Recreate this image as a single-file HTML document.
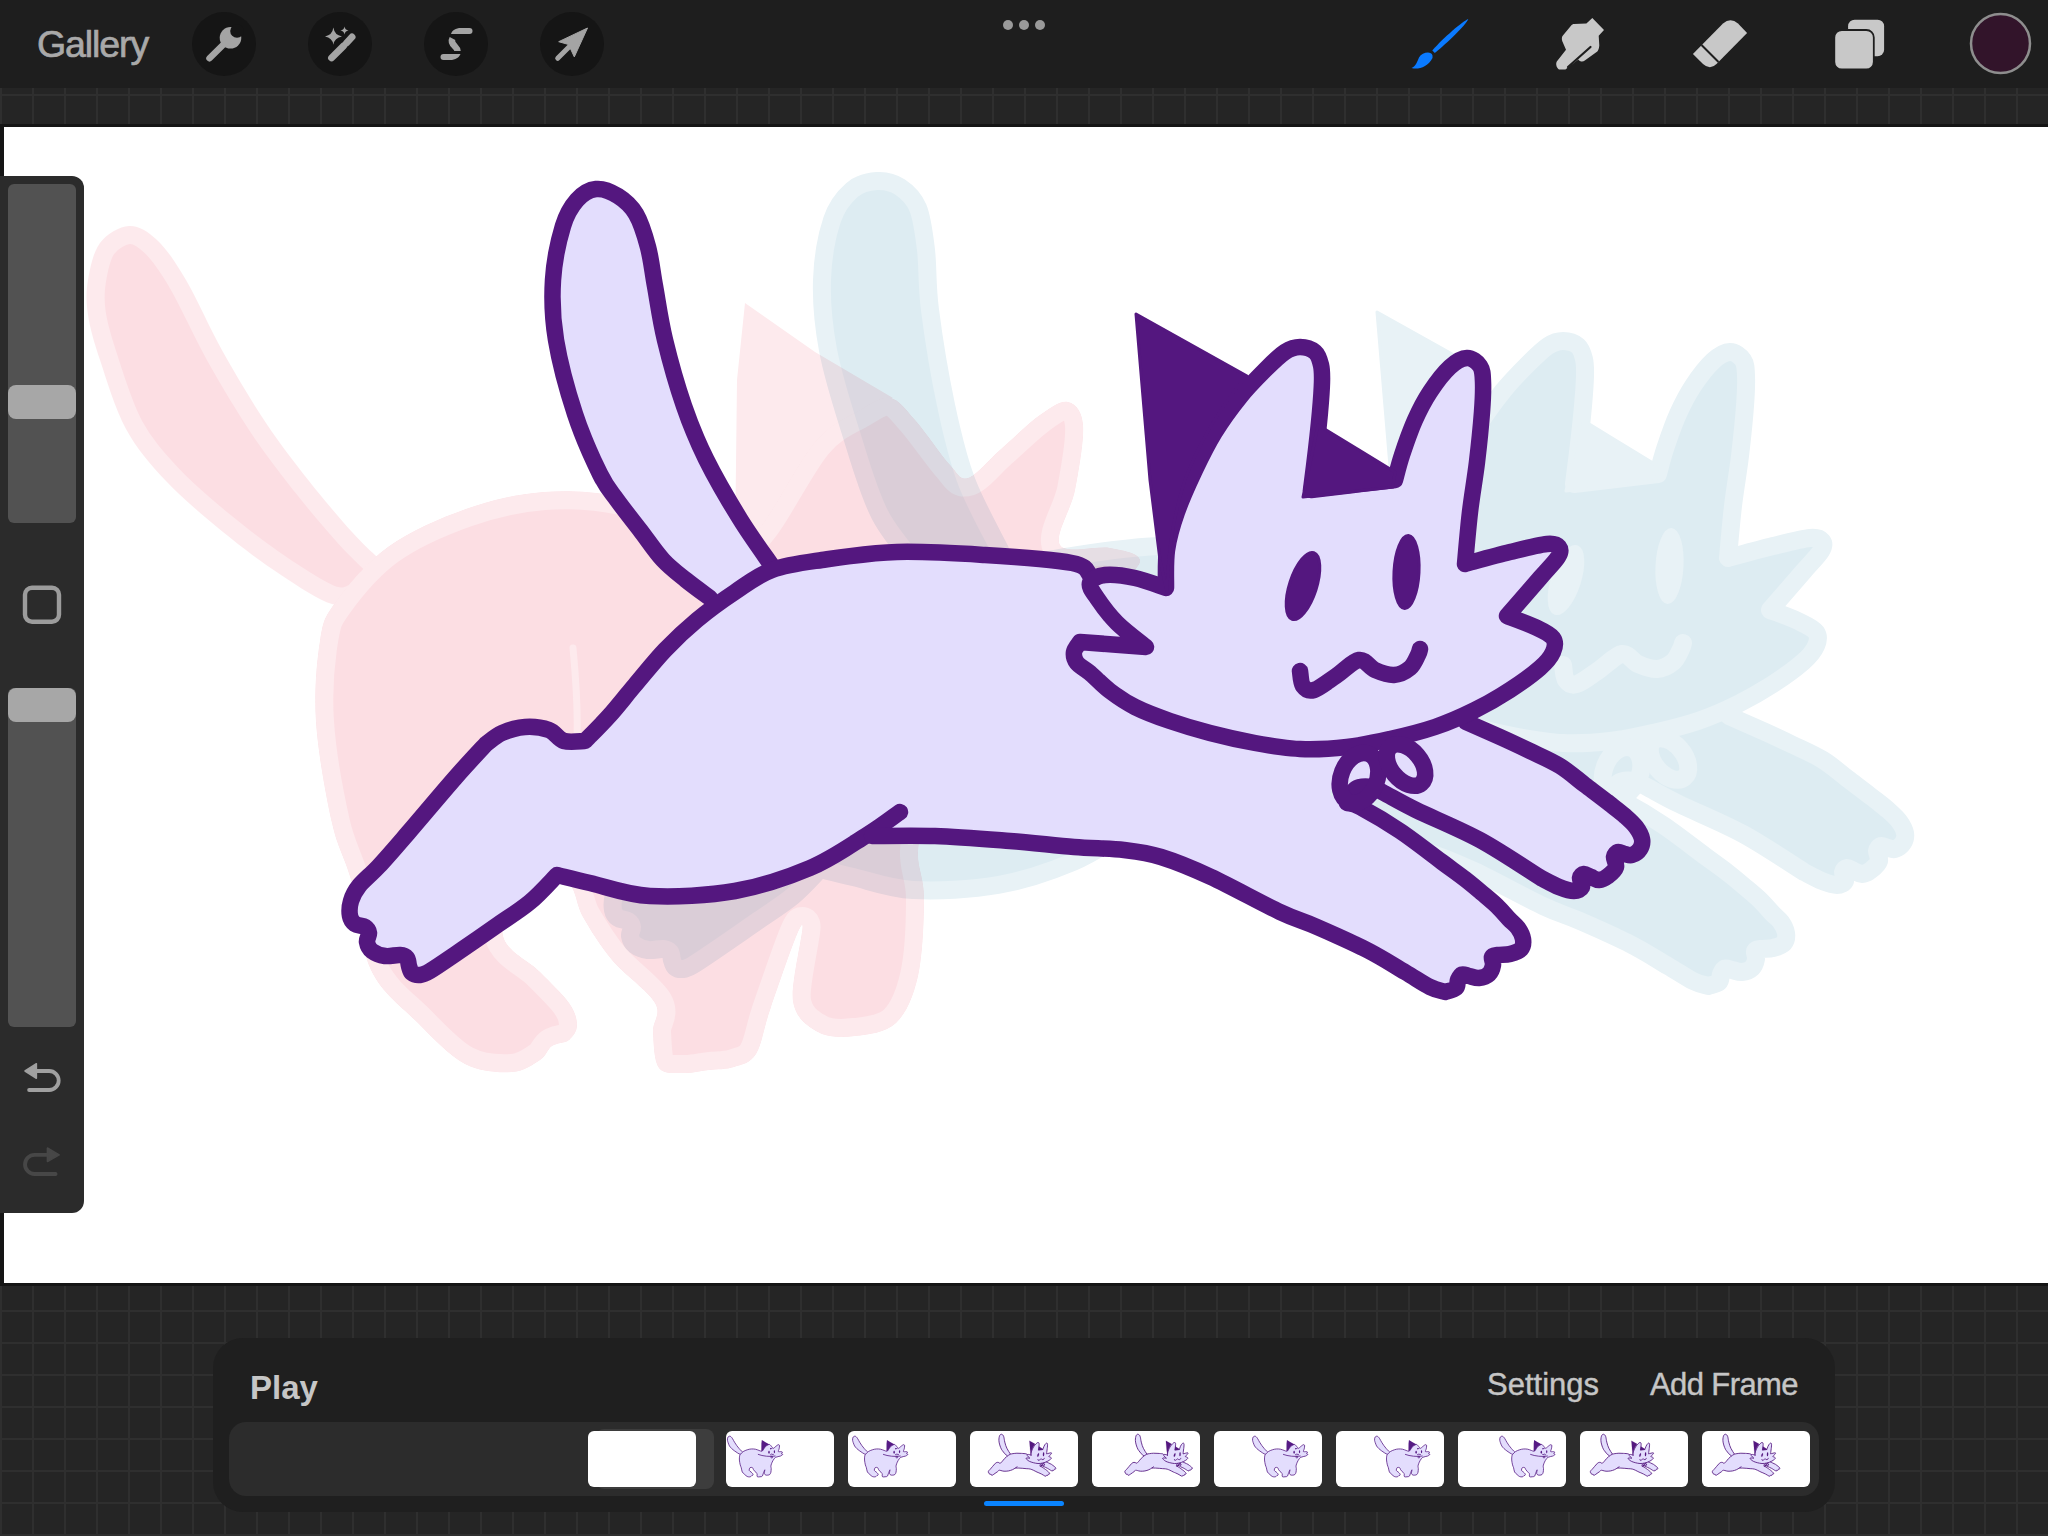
<!DOCTYPE html><html><head><meta charset="utf-8"><style>
*{margin:0;padding:0;box-sizing:border-box}
html,body{width:2048px;height:1536px;overflow:hidden;background:#252525;font-family:"Liberation Sans",sans-serif}
.grid{position:absolute;left:0;width:2048px;background-color:#252525;
 background-image:linear-gradient(to right, #2f2f2f 0 2px, transparent 2px), linear-gradient(to bottom, #2f2f2f 0 2px, transparent 2px);
 background-size:32px 32px;}
#topgrid{top:88px;height:39px;background-position:0px 6px}
#botgrid{top:1283px;height:253px;background-position:0px 27px}
#topbar{position:absolute;left:0;top:0;width:2048px;height:88px;background:#1e1e1e}
#canvas{position:absolute;left:4px;top:127px;width:2044px;height:1156px;background:#fff;overflow:hidden}
#shadowL{position:absolute;left:0;top:124px;width:4px;height:1162px;background:#151515}
#shadowT{position:absolute;left:0;top:124px;width:2048px;height:3px;background:#151515}
#shadowB{position:absolute;left:0;top:1283px;width:2048px;height:3px;background:#151515}
.gal{position:absolute;left:37px;top:23px;font-size:37.5px;color:#a9a9a9;letter-spacing:-1.1px;-webkit-text-stroke:0.7px #a9a9a9}
.circ{position:absolute;top:12px;width:64px;height:64px;border-radius:50%;background:#151515}
#side{position:absolute;left:0;top:176px;width:84px;height:1037px;background:#2b2b2b;border-radius:0 12px 12px 0}
.track{position:absolute;left:8px;width:68px;background:#525252;border-radius:6px}
.thumb{position:absolute;left:8px;width:68px;height:34px;background:#a7a7a7;border-radius:8px}
#panel{position:absolute;left:213px;top:1338px;width:1622px;height:174px;background:#1f1f1f;border-radius:30px}
#ptrack{position:absolute;left:229px;top:1422px;width:1590px;height:74px;background:#2c2c2c;border-radius:17px}
.txt{position:absolute;color:#c6c6c6;font-size:31px;-webkit-text-stroke:0.4px #c6c6c6}
.frame{position:absolute;top:1431px;width:108px;height:56px;background:#fff;border-radius:6px;overflow:hidden}
</style></head><body>
<div id="topbar"></div>
<div class="grid" id="topgrid"></div>
<div class="grid" id="botgrid"></div>
<div id="shadowT"></div><div id="shadowL"></div><div id="shadowB"></div>
<svg style="position:absolute;left:0;top:0" width="2048" height="1536" viewBox="0 0 2048 1536">
<rect x="4" y="127" width="2044" height="1156" fill="#fff"/>
<defs><clipPath id="cv"><rect x="4" y="127" width="2044" height="1156"/></clipPath>
<g id="catS"><g fill="#e3ddfd" stroke="none"><path d="M710.0,598.0 C706.0,595.0 693.8,586.3 686.0,580.0 C678.2,573.7 670.7,568.3 663.0,560.0 C655.3,551.7 647.7,540.0 640.0,530.0 C632.3,520.0 623.7,509.3 617.0,500.0 C610.3,490.7 607.0,488.3 600.0,474.0 C593.0,459.7 582.3,436.3 575.0,414.0 C567.7,391.7 559.7,362.3 556.0,340.0 C552.3,317.7 551.8,299.0 553.0,280.0 C554.2,261.0 559.0,239.3 563.0,226.0 C567.0,212.7 571.5,206.2 577.0,200.0 C582.5,193.8 589.2,189.7 596.0,189.0 C602.8,188.3 611.3,191.8 618.0,196.0 C624.7,200.2 631.0,205.5 636.0,214.0 C641.0,222.5 644.8,235.0 648.0,247.0 C651.2,259.0 652.2,270.5 655.0,286.0 C657.8,301.5 660.2,320.0 665.0,340.0 C669.8,360.0 677.2,386.2 684.0,406.0 C690.8,425.8 696.7,440.2 706.0,459.0 C715.3,477.8 729.0,501.2 740.0,519.0 C751.0,536.8 766.7,558.2 772.0,566.0 L765,580 Z"/><path d="M1090.0,575.0 C1087.0,573.0 1089.5,566.3 1072.0,563.0 C1054.5,559.7 1014.2,556.8 985.0,555.0 C955.8,553.2 924.2,551.2 897.0,552.0 C869.8,552.8 842.8,557.0 822.0,560.0 C801.2,563.0 786.5,564.7 772.0,570.0 C757.5,575.3 747.5,583.7 735.0,592.0 C722.5,600.3 708.7,610.3 697.0,620.0 C685.3,629.7 675.3,639.2 665.0,650.0 C654.7,660.8 644.2,674.2 635.0,685.0 C625.8,695.8 618.3,705.7 610.0,715.0 C601.7,724.3 589.2,736.7 585.0,741.0 C581.5,741.0 570.0,742.8 564.0,741.0 C558.0,739.2 555.5,732.3 549.0,730.0 C542.5,727.7 532.8,726.5 525.0,727.0 C517.2,727.5 508.5,730.2 502.0,733.0 C495.5,735.8 488.7,742.2 486.0,744.0 C480.8,749.7 468.0,763.2 455.0,778.0 C442.0,792.8 420.7,818.3 408.0,833.0 C395.3,847.7 387.2,857.2 379.0,866.0 C370.8,874.8 363.7,880.2 359.0,886.0 C354.3,891.8 352.5,896.0 351.0,901.0 C349.5,906.0 349.3,912.2 350.0,916.0 C350.7,919.8 352.5,922.2 355.0,924.0 C357.5,925.8 362.7,925.5 365.0,927.0 C367.3,928.5 368.7,930.5 369.0,933.0 C369.3,935.5 366.5,939.0 367.0,942.0 C367.5,945.0 369.0,948.7 372.0,951.0 C375.0,953.3 380.3,955.3 385.0,956.0 C389.7,956.7 396.3,954.7 400.0,955.0 C403.7,955.3 405.5,956.2 407.0,958.0 C408.5,959.8 408.2,963.5 409.0,966.0 C409.8,968.5 410.2,971.5 412.0,973.0 C413.8,974.5 417.0,975.3 420.0,975.0 C423.0,974.7 423.8,974.7 430.0,971.0 C436.2,967.3 446.0,960.5 457.0,953.0 C468.0,945.5 483.8,934.5 496.0,926.0 C508.2,917.5 519.8,910.5 530.0,902.0 C540.2,893.5 552.5,879.5 557.0,875.0 C562.5,876.3 574.5,879.5 590.0,883.0 C605.5,886.5 625.8,894.7 650.0,896.0 C674.2,897.3 708.3,895.7 735.0,891.0 C761.7,886.3 788.0,877.3 810.0,868.0 C832.0,858.7 856.2,840.5 867.0,835.0 C877.8,829.5 873.7,835.0 875.0,835.0 C882.5,836.0 912.0,835.2 935.0,836.0 C958.0,836.8 986.8,839.2 1010.0,841.0 C1033.2,842.8 1055.0,845.5 1074.0,847.0 C1093.0,848.5 1109.5,848.3 1124.0,850.0 C1138.5,851.7 1146.5,852.5 1161.0,857.0 C1175.5,861.5 1191.2,867.8 1211.0,877.0 C1230.8,886.2 1262.3,903.7 1280.0,912.0 C1297.7,920.3 1302.5,920.7 1317.0,927.0 C1331.5,933.3 1352.3,942.5 1367.0,950.0 C1381.7,957.5 1394.5,965.8 1405.0,972.0 C1415.5,978.2 1423.3,983.7 1430.0,987.0 C1436.7,990.3 1442.5,991.2 1445.0,992.0 C1446.8,991.3 1453.8,990.0 1456.0,988.0 C1458.2,986.0 1457.0,982.2 1458.0,980.0 C1459.0,977.8 1460.2,975.2 1462.0,974.5 C1463.8,973.8 1466.2,975.4 1469.0,976.0 C1471.8,976.6 1475.7,978.3 1479.0,978.0 C1482.3,977.7 1486.7,976.2 1489.0,974.0 C1491.3,971.8 1492.5,967.8 1493.0,965.0 C1493.5,962.2 1491.2,958.7 1492.0,957.0 C1492.8,955.3 1495.0,955.5 1498.0,955.0 C1501.0,954.5 1506.2,955.0 1510.0,954.0 C1513.8,953.0 1518.8,951.5 1521.0,949.0 C1523.2,946.5 1523.5,942.5 1523.0,939.0 C1522.5,935.5 1520.3,931.3 1518.0,928.0 C1515.7,924.7 1512.5,922.7 1509.0,919.0 C1505.5,915.3 1501.5,910.3 1497.0,906.0 C1492.5,901.7 1487.3,897.5 1482.0,893.0 C1476.7,888.5 1471.7,884.2 1465.0,879.0 C1458.3,873.8 1452.8,870.0 1442.0,862.0 C1431.2,854.0 1413.7,840.2 1400.0,831.0 C1386.3,821.8 1368.8,811.7 1360.0,807.0 C1351.2,802.3 1349.2,803.7 1347.0,803.0 L1330,795 L1343,752 L1420,735 L1300,700 L1150,600 Z"/><path d="M1348.0,798.0 C1349.5,796.3 1353.0,789.8 1357.0,788.0 C1361.0,786.2 1367.5,786.2 1372.0,787.0 C1376.5,787.8 1376.7,789.2 1384.0,793.0 C1391.3,796.8 1400.0,802.2 1416.0,810.0 C1432.0,817.8 1459.2,828.7 1480.0,840.0 C1500.8,851.3 1530.8,871.7 1541.0,878.0 C1544.0,879.5 1553.5,884.8 1559.0,887.0 C1564.5,889.2 1570.2,891.0 1574.0,891.0 C1577.8,891.0 1581.0,889.2 1582.0,887.0 C1583.0,884.8 1579.7,880.2 1580.0,878.0 C1580.3,875.8 1582.2,874.2 1584.0,874.0 C1585.8,873.8 1588.5,876.0 1591.0,877.0 C1593.5,878.0 1596.2,880.2 1599.0,880.0 C1601.8,879.8 1605.2,878.2 1608.0,876.0 C1610.8,873.8 1615.0,870.2 1616.0,867.0 C1617.0,863.8 1613.7,859.5 1614.0,857.0 C1614.3,854.5 1616.2,852.5 1618.0,852.0 C1619.8,851.5 1622.7,853.5 1625.0,854.0 C1627.3,854.5 1629.5,855.8 1632.0,855.0 C1634.5,854.2 1638.3,851.7 1640.0,849.0 C1641.7,846.3 1642.7,842.7 1642.0,839.0 C1641.3,835.3 1638.8,830.8 1636.0,827.0 C1633.2,823.2 1629.3,819.8 1625.0,816.0 C1620.7,812.2 1616.7,809.2 1610.0,804.0 C1603.3,798.8 1593.3,791.3 1585.0,785.0 C1576.7,778.7 1569.2,771.7 1560.0,766.0 C1550.8,760.3 1540.0,755.8 1530.0,751.0 C1520.0,746.2 1510.7,741.8 1500.0,737.0 C1489.3,732.2 1471.7,724.5 1466.0,722.0 L1435,727 L1340,750 L1335,790 Z"/><path d="M1166.0,588.0 C1160.8,586.3 1145.2,580.2 1135.0,578.0 C1124.8,575.8 1112.5,574.2 1105.0,575.0 C1097.5,575.8 1091.3,579.2 1090.0,583.0 C1088.7,586.8 1092.5,591.3 1097.0,598.0 C1101.5,604.7 1108.8,614.8 1117.0,623.0 C1125.2,631.2 1141.2,643.0 1146.0,647.0 C1135.0,646.2 1091.0,642.8 1080.0,642.0 C1079.0,643.7 1074.5,648.5 1074.0,652.0 C1073.5,655.5 1074.3,659.5 1077.0,663.0 C1079.7,666.5 1084.5,668.3 1090.0,673.0 C1095.5,677.7 1102.5,685.3 1110.0,691.0 C1117.5,696.7 1125.0,702.0 1135.0,707.0 C1145.0,712.0 1157.5,716.7 1170.0,721.0 C1182.5,725.3 1195.8,729.3 1210.0,733.0 C1224.2,736.7 1240.0,740.3 1255.0,743.0 C1270.0,745.7 1284.7,748.3 1300.0,749.0 C1315.3,749.7 1332.0,748.7 1347.0,747.0 C1362.0,745.3 1375.3,742.3 1390.0,739.0 C1404.7,735.7 1420.8,731.8 1435.0,727.0 C1449.2,722.2 1462.5,716.2 1475.0,710.0 C1487.5,703.8 1499.2,697.0 1510.0,690.0 C1520.8,683.0 1532.8,674.3 1540.0,668.0 C1547.2,661.7 1550.8,657.0 1553.0,652.0 C1555.2,647.0 1556.0,642.2 1553.0,638.0 C1550.0,633.8 1542.7,630.7 1535.0,627.0 C1527.3,623.3 1511.7,617.8 1507.0,616.0 C1512.5,609.7 1531.5,587.8 1540.0,578.0 C1548.5,568.2 1554.8,562.2 1558.0,557.0 C1561.2,551.8 1560.8,549.2 1559.0,547.0 C1557.2,544.8 1555.2,543.2 1547.0,544.0 C1538.8,544.8 1523.7,548.7 1510.0,552.0 C1496.3,555.3 1472.5,562.0 1465.0,564.0 C1465.8,555.3 1468.0,529.0 1470.0,512.0 C1472.0,495.0 1475.0,478.7 1477.0,462.0 C1479.0,445.3 1481.0,425.3 1482.0,412.0 C1483.0,398.7 1483.3,389.7 1483.0,382.0 C1482.7,374.3 1482.7,370.0 1480.0,366.0 C1477.3,362.0 1472.0,357.8 1467.0,358.0 C1462.0,358.2 1456.2,361.3 1450.0,367.0 C1443.8,372.7 1435.8,383.2 1430.0,392.0 C1424.2,400.8 1419.7,409.5 1415.0,420.0 C1410.3,430.5 1405.3,445.0 1402.0,455.0 C1398.7,465.0 1396.2,475.8 1395.0,480.0 C1381.0,481.7 1325.0,488.3 1311.0,490.0 C1311.8,483.3 1314.5,463.0 1316.0,450.0 C1317.5,437.0 1319.0,423.3 1320.0,412.0 C1321.0,400.7 1321.8,389.8 1322.0,382.0 C1322.2,374.2 1322.2,370.0 1321.0,365.0 C1319.8,360.0 1318.5,355.0 1315.0,352.0 C1311.5,349.0 1305.0,347.0 1300.0,347.0 C1295.0,347.0 1290.8,348.2 1285.0,352.0 C1279.2,355.8 1272.5,362.5 1265.0,370.0 C1257.5,377.5 1248.3,386.7 1240.0,397.0 C1231.7,407.3 1222.5,419.8 1215.0,432.0 C1207.5,444.2 1201.3,456.7 1195.0,470.0 C1188.7,483.3 1181.7,498.7 1177.0,512.0 C1172.3,525.3 1168.8,537.3 1167.0,550.0 C1165.2,562.7 1166.2,581.7 1166.0,588.0 Z"/></g>
<g fill="none" stroke="#54177f" stroke-width="16.5" stroke-linecap="round" stroke-linejoin="round"><path d="M710.0,598.0 C706.0,595.0 693.8,586.3 686.0,580.0 C678.2,573.7 670.7,568.3 663.0,560.0 C655.3,551.7 647.7,540.0 640.0,530.0 C632.3,520.0 623.7,509.3 617.0,500.0 C610.3,490.7 607.0,488.3 600.0,474.0 C593.0,459.7 582.3,436.3 575.0,414.0 C567.7,391.7 559.7,362.3 556.0,340.0 C552.3,317.7 551.8,299.0 553.0,280.0 C554.2,261.0 559.0,239.3 563.0,226.0 C567.0,212.7 571.5,206.2 577.0,200.0 C582.5,193.8 589.2,189.7 596.0,189.0 C602.8,188.3 611.3,191.8 618.0,196.0 C624.7,200.2 631.0,205.5 636.0,214.0 C641.0,222.5 644.8,235.0 648.0,247.0 C651.2,259.0 652.2,270.5 655.0,286.0 C657.8,301.5 660.2,320.0 665.0,340.0 C669.8,360.0 677.2,386.2 684.0,406.0 C690.8,425.8 696.7,440.2 706.0,459.0 C715.3,477.8 729.0,501.2 740.0,519.0 C751.0,536.8 766.7,558.2 772.0,566.0"/><path d="M1090.0,575.0 C1087.0,573.0 1089.5,566.3 1072.0,563.0 C1054.5,559.7 1014.2,556.8 985.0,555.0 C955.8,553.2 924.2,551.2 897.0,552.0 C869.8,552.8 842.8,557.0 822.0,560.0 C801.2,563.0 786.5,564.7 772.0,570.0 C757.5,575.3 747.5,583.7 735.0,592.0 C722.5,600.3 708.7,610.3 697.0,620.0 C685.3,629.7 675.3,639.2 665.0,650.0 C654.7,660.8 644.2,674.2 635.0,685.0 C625.8,695.8 618.3,705.7 610.0,715.0 C601.7,724.3 589.2,736.7 585.0,741.0 C581.5,741.0 570.0,742.8 564.0,741.0 C558.0,739.2 555.5,732.3 549.0,730.0 C542.5,727.7 532.8,726.5 525.0,727.0 C517.2,727.5 508.5,730.2 502.0,733.0 C495.5,735.8 488.7,742.2 486.0,744.0 C480.8,749.7 468.0,763.2 455.0,778.0 C442.0,792.8 420.7,818.3 408.0,833.0 C395.3,847.7 387.2,857.2 379.0,866.0 C370.8,874.8 363.7,880.2 359.0,886.0 C354.3,891.8 352.5,896.0 351.0,901.0 C349.5,906.0 349.3,912.2 350.0,916.0 C350.7,919.8 352.5,922.2 355.0,924.0 C357.5,925.8 362.7,925.5 365.0,927.0 C367.3,928.5 368.7,930.5 369.0,933.0 C369.3,935.5 366.5,939.0 367.0,942.0 C367.5,945.0 369.0,948.7 372.0,951.0 C375.0,953.3 380.3,955.3 385.0,956.0 C389.7,956.7 396.3,954.7 400.0,955.0 C403.7,955.3 405.5,956.2 407.0,958.0 C408.5,959.8 408.2,963.5 409.0,966.0 C409.8,968.5 410.2,971.5 412.0,973.0 C413.8,974.5 417.0,975.3 420.0,975.0 C423.0,974.7 423.8,974.7 430.0,971.0 C436.2,967.3 446.0,960.5 457.0,953.0 C468.0,945.5 483.8,934.5 496.0,926.0 C508.2,917.5 519.8,910.5 530.0,902.0 C540.2,893.5 552.5,879.5 557.0,875.0 C562.5,876.3 574.5,879.5 590.0,883.0 C605.5,886.5 625.8,894.7 650.0,896.0 C674.2,897.3 708.3,895.7 735.0,891.0 C761.7,886.3 788.0,877.3 810.0,868.0 C832.0,858.7 852.0,844.3 867.0,835.0 C882.0,825.7 894.5,815.8 900.0,812.0"/><path d="M872.0,836.0 C882.5,836.0 912.0,835.2 935.0,836.0 C958.0,836.8 986.8,839.2 1010.0,841.0 C1033.2,842.8 1055.0,845.5 1074.0,847.0 C1093.0,848.5 1109.5,848.3 1124.0,850.0 C1138.5,851.7 1146.5,852.5 1161.0,857.0 C1175.5,861.5 1191.2,867.8 1211.0,877.0 C1230.8,886.2 1262.3,903.7 1280.0,912.0 C1297.7,920.3 1302.5,920.7 1317.0,927.0 C1331.5,933.3 1352.3,942.5 1367.0,950.0 C1381.7,957.5 1394.5,965.8 1405.0,972.0 C1415.5,978.2 1423.3,983.7 1430.0,987.0 C1436.7,990.3 1442.5,991.2 1445.0,992.0 C1446.8,991.3 1453.8,990.0 1456.0,988.0 C1458.2,986.0 1457.0,982.2 1458.0,980.0 C1459.0,977.8 1460.2,975.2 1462.0,974.5 C1463.8,973.8 1466.2,975.4 1469.0,976.0 C1471.8,976.6 1475.7,978.3 1479.0,978.0 C1482.3,977.7 1486.7,976.2 1489.0,974.0 C1491.3,971.8 1492.5,967.8 1493.0,965.0 C1493.5,962.2 1491.2,958.7 1492.0,957.0 C1492.8,955.3 1495.0,955.5 1498.0,955.0 C1501.0,954.5 1506.2,955.0 1510.0,954.0 C1513.8,953.0 1518.8,951.5 1521.0,949.0 C1523.2,946.5 1523.5,942.5 1523.0,939.0 C1522.5,935.5 1520.3,931.3 1518.0,928.0 C1515.7,924.7 1512.5,922.7 1509.0,919.0 C1505.5,915.3 1501.5,910.3 1497.0,906.0 C1492.5,901.7 1487.3,897.5 1482.0,893.0 C1476.7,888.5 1471.7,884.2 1465.0,879.0 C1458.3,873.8 1452.8,870.0 1442.0,862.0 C1431.2,854.0 1413.7,840.2 1400.0,831.0 C1386.3,821.8 1368.8,811.7 1360.0,807.0 C1351.2,802.3 1349.2,803.7 1347.0,803.0"/><path d="M1348.0,798.0 C1349.5,796.3 1353.0,789.8 1357.0,788.0 C1361.0,786.2 1367.5,786.2 1372.0,787.0 C1376.5,787.8 1376.7,789.2 1384.0,793.0 C1391.3,796.8 1400.0,802.2 1416.0,810.0 C1432.0,817.8 1459.2,828.7 1480.0,840.0 C1500.8,851.3 1530.8,871.7 1541.0,878.0 C1544.0,879.5 1553.5,884.8 1559.0,887.0 C1564.5,889.2 1570.2,891.0 1574.0,891.0 C1577.8,891.0 1581.0,889.2 1582.0,887.0 C1583.0,884.8 1579.7,880.2 1580.0,878.0 C1580.3,875.8 1582.2,874.2 1584.0,874.0 C1585.8,873.8 1588.5,876.0 1591.0,877.0 C1593.5,878.0 1596.2,880.2 1599.0,880.0 C1601.8,879.8 1605.2,878.2 1608.0,876.0 C1610.8,873.8 1615.0,870.2 1616.0,867.0 C1617.0,863.8 1613.7,859.5 1614.0,857.0 C1614.3,854.5 1616.2,852.5 1618.0,852.0 C1619.8,851.5 1622.7,853.5 1625.0,854.0 C1627.3,854.5 1629.5,855.8 1632.0,855.0 C1634.5,854.2 1638.3,851.7 1640.0,849.0 C1641.7,846.3 1642.7,842.7 1642.0,839.0 C1641.3,835.3 1638.8,830.8 1636.0,827.0 C1633.2,823.2 1629.3,819.8 1625.0,816.0 C1620.7,812.2 1616.7,809.2 1610.0,804.0 C1603.3,798.8 1593.3,791.3 1585.0,785.0 C1576.7,778.7 1569.2,771.7 1560.0,766.0 C1550.8,760.3 1540.0,755.8 1530.0,751.0 C1520.0,746.2 1510.7,741.8 1500.0,737.0 C1489.3,732.2 1471.7,724.5 1466.0,722.0"/><path d="M1166.0,588.0 C1160.8,586.3 1145.2,580.2 1135.0,578.0 C1124.8,575.8 1112.5,574.2 1105.0,575.0 C1097.5,575.8 1091.3,579.2 1090.0,583.0 C1088.7,586.8 1092.5,591.3 1097.0,598.0 C1101.5,604.7 1108.8,614.8 1117.0,623.0 C1125.2,631.2 1141.2,643.0 1146.0,647.0 C1135.0,646.2 1091.0,642.8 1080.0,642.0 C1079.0,643.7 1074.5,648.5 1074.0,652.0 C1073.5,655.5 1074.3,659.5 1077.0,663.0 C1079.7,666.5 1084.5,668.3 1090.0,673.0 C1095.5,677.7 1102.5,685.3 1110.0,691.0 C1117.5,696.7 1125.0,702.0 1135.0,707.0 C1145.0,712.0 1157.5,716.7 1170.0,721.0 C1182.5,725.3 1195.8,729.3 1210.0,733.0 C1224.2,736.7 1240.0,740.3 1255.0,743.0 C1270.0,745.7 1284.7,748.3 1300.0,749.0 C1315.3,749.7 1332.0,748.7 1347.0,747.0 C1362.0,745.3 1375.3,742.3 1390.0,739.0 C1404.7,735.7 1420.8,731.8 1435.0,727.0 C1449.2,722.2 1462.5,716.2 1475.0,710.0 C1487.5,703.8 1499.2,697.0 1510.0,690.0 C1520.8,683.0 1532.8,674.3 1540.0,668.0 C1547.2,661.7 1550.8,657.0 1553.0,652.0 C1555.2,647.0 1556.0,642.2 1553.0,638.0 C1550.0,633.8 1542.7,630.7 1535.0,627.0 C1527.3,623.3 1511.7,617.8 1507.0,616.0 C1512.5,609.7 1531.5,587.8 1540.0,578.0 C1548.5,568.2 1554.8,562.2 1558.0,557.0 C1561.2,551.8 1560.8,549.2 1559.0,547.0 C1557.2,544.8 1555.2,543.2 1547.0,544.0 C1538.8,544.8 1523.7,548.7 1510.0,552.0 C1496.3,555.3 1472.5,562.0 1465.0,564.0 C1465.8,555.3 1468.0,529.0 1470.0,512.0 C1472.0,495.0 1475.0,478.7 1477.0,462.0 C1479.0,445.3 1481.0,425.3 1482.0,412.0 C1483.0,398.7 1483.3,389.7 1483.0,382.0 C1482.7,374.3 1482.7,370.0 1480.0,366.0 C1477.3,362.0 1472.0,357.8 1467.0,358.0 C1462.0,358.2 1456.2,361.3 1450.0,367.0 C1443.8,372.7 1435.8,383.2 1430.0,392.0 C1424.2,400.8 1419.7,409.5 1415.0,420.0 C1410.3,430.5 1405.3,445.0 1402.0,455.0 C1398.7,465.0 1396.2,475.8 1395.0,480.0 C1381.0,481.7 1325.0,488.3 1311.0,490.0 C1311.8,483.3 1314.5,463.0 1316.0,450.0 C1317.5,437.0 1319.0,423.3 1320.0,412.0 C1321.0,400.7 1321.8,389.8 1322.0,382.0 C1322.2,374.2 1322.2,370.0 1321.0,365.0 C1319.8,360.0 1318.5,355.0 1315.0,352.0 C1311.5,349.0 1305.0,347.0 1300.0,347.0 C1295.0,347.0 1290.8,348.2 1285.0,352.0 C1279.2,355.8 1272.5,362.5 1265.0,370.0 C1257.5,377.5 1248.3,386.7 1240.0,397.0 C1231.7,407.3 1222.5,419.8 1215.0,432.0 C1207.5,444.2 1201.3,456.7 1195.0,470.0 C1188.7,483.3 1181.7,498.7 1177.0,512.0 C1172.3,525.3 1168.8,537.3 1167.0,550.0 C1165.2,562.7 1166.2,581.7 1166.0,588.0 Z"/><path d="M1300.0,671.0 C1300.5,673.5 1300.7,682.8 1303.0,686.0 C1305.3,689.2 1308.5,691.7 1314.0,690.0 C1319.5,688.3 1328.5,681.0 1336.0,676.0 C1343.5,671.0 1352.5,661.0 1359.0,660.0 C1365.5,659.0 1369.2,667.5 1375.0,670.0 C1380.8,672.5 1388.2,675.3 1394.0,675.0 C1399.8,674.7 1406.0,671.3 1410.0,668.0 C1414.0,664.7 1416.3,658.2 1418.0,655.0 C1419.7,651.8 1419.7,650.0 1420.0,649.0"/><ellipse cx="1359" cy="778" rx="18" ry="26" transform="rotate(22 1359 778)"/><ellipse cx="1406" cy="765" rx="15" ry="24" transform="rotate(-40 1406 765)"/></g>
<g fill="#54177f" stroke="#54177f" stroke-width="3" stroke-linejoin="round"><path transform="translate(0,0)" d="M1136,314 L1247,376 C1225,400 1200,440 1185,480 C1175,510 1168,550 1167,592 L1160,560 L1150,480 Z"/><path d="M1318,425 L1395,472 L1393,487 L1303,497 Z"/><ellipse cx="1303" cy="586" rx="13.5" ry="35" transform="rotate(18 1303 586)"/><ellipse cx="1406.5" cy="572" rx="12.5" ry="36.5" transform="rotate(3 1406.5 572)"/></g></g>
<g id="catC"><g transform="translate(0,18) scale(1,0.92)"><path d="M735,548 L737,380 L745,303 L815,352 L893,398 C850,420 800,470 770,540 Z" fill="#561b85"/>
<path d="M378.0,558.0 C371.7,551.7 363.5,544.8 352.0,532.0 C340.5,519.2 323.3,499.2 309.0,481.0 C294.7,462.8 280.3,444.5 266.0,423.0 C251.7,401.5 236.3,375.8 223.0,352.0 C209.7,328.2 197.0,298.7 186.0,280.0 C175.0,261.3 166.5,249.0 157.0,240.0 C147.5,231.0 138.5,225.5 129.0,226.0 C119.5,226.5 106.8,234.0 100.0,243.0 C93.2,252.0 90.0,268.0 88.0,280.0 C86.0,292.0 86.0,301.7 88.0,315.0 C90.0,328.3 93.7,341.0 100.0,360.0 C106.3,379.0 115.0,408.8 126.0,429.0 C137.0,449.2 149.8,463.8 166.0,481.0 C182.2,498.2 203.8,516.3 223.0,532.0 C242.2,547.7 262.8,563.0 281.0,575.0 C299.2,587.0 318.5,600.2 332.0,604.0 C345.5,607.8 352.3,603.7 362.0,598.0 C371.7,592.3 387.3,576.7 390.0,570.0 C392.7,563.3 384.3,564.3 378.0,558.0 Z" fill="#e3ddfd" stroke="#561b85" stroke-width="16" stroke-linejoin="round"/>
<path d="M388.0,547.0 C409.8,531.3 440.0,518.2 466.0,509.0 C492.0,499.8 518.0,494.0 544.0,492.0 C570.0,490.0 597.7,492.0 622.0,497.0 C646.3,502.0 670.7,514.8 690.0,522.0 C709.3,529.2 726.0,539.5 738.0,540.0 C750.0,540.5 749.2,541.3 762.0,525.0 C774.8,508.7 798.7,461.2 815.0,442.0 C831.3,422.8 847.5,417.3 860.0,410.0 C872.5,402.7 880.8,396.3 890.0,398.0 C899.2,399.7 905.0,408.8 915.0,420.0 C925.0,431.2 941.2,455.3 950.0,465.0 C958.8,474.7 959.7,480.5 968.0,478.0 C976.3,475.5 988.0,460.5 1000.0,450.0 C1012.0,439.5 1028.7,423.0 1040.0,415.0 C1051.3,407.0 1060.8,400.3 1068.0,402.0 C1075.2,403.7 1081.8,410.3 1083.0,425.0 C1084.2,439.7 1078.8,470.0 1075.0,490.0 C1071.2,510.0 1054.2,535.3 1060.0,545.0 C1065.8,554.7 1096.7,545.5 1110.0,548.0 C1123.3,550.5 1138.3,553.0 1140.0,560.0 C1141.7,567.0 1119.2,582.5 1120.0,590.0 C1120.8,597.5 1148.3,596.7 1145.0,605.0 C1141.7,613.3 1122.5,630.0 1100.0,640.0 C1077.5,650.0 1033.3,650.0 1010.0,665.0 C986.7,680.0 973.3,707.5 960.0,730.0 C946.7,752.5 937.0,779.8 930.0,800.0 C923.0,820.2 919.0,834.7 918.0,851.0 C917.0,867.3 924.0,877.2 924.0,898.0 C924.0,918.8 922.7,955.2 918.0,976.0 C913.3,996.8 906.5,1013.0 896.0,1023.0 C885.5,1033.0 868.0,1034.5 855.0,1036.0 C842.0,1037.5 828.3,1037.8 818.0,1032.0 C807.7,1026.2 795.7,1018.8 793.0,1001.0 C790.3,983.2 805.7,924.0 802.0,925.0 C798.3,926.0 778.7,985.5 771.0,1007.0 C763.3,1028.5 762.2,1044.0 756.0,1054.0 C749.8,1064.0 741.8,1064.3 734.0,1067.0 C726.2,1069.7 717.3,1069.0 709.0,1070.0 C700.7,1071.0 692.3,1073.3 684.0,1073.0 C675.7,1072.7 664.2,1074.8 659.0,1068.0 C653.8,1061.2 653.7,1042.8 653.0,1032.0 C652.3,1021.2 661.8,1015.0 655.0,1003.0 C648.2,991.0 624.0,974.3 612.0,960.0 C600.0,945.7 590.7,930.2 583.0,917.0 C575.3,903.8 576.5,887.2 566.0,881.0 C555.5,874.8 530.5,870.8 520.0,880.0 C509.5,889.2 499.7,920.7 503.0,936.0 C506.3,951.3 529.0,960.8 540.0,972.0 C551.0,983.2 562.8,994.2 569.0,1003.0 C575.2,1011.8 577.0,1018.8 577.0,1025.0 C577.0,1031.2 573.2,1036.5 569.0,1040.0 C564.8,1043.5 556.8,1042.7 552.0,1046.0 C547.2,1049.3 546.7,1055.7 540.0,1060.0 C533.3,1064.3 524.5,1071.3 512.0,1072.0 C499.5,1072.7 480.7,1072.2 465.0,1064.0 C449.3,1055.8 433.7,1038.7 418.0,1023.0 C402.3,1007.3 382.0,993.3 371.0,970.0 C360.0,946.7 358.5,907.5 352.0,883.0 C345.5,858.5 338.0,849.8 332.0,823.0 C326.0,796.2 318.0,752.3 316.0,722.0 C314.0,691.7 316.8,660.8 320.0,641.0 C323.2,621.2 323.7,618.7 335.0,603.0 C346.3,587.3 366.2,562.7 388.0,547.0 Z" fill="#e3ddfd" stroke="#561b85" stroke-width="16" stroke-linejoin="round"/>
<path d="M670,603 C760,640 900,660 1007,638" fill="none" stroke="#561b85" stroke-width="16"/>
<path d="M900,470 L960,480 L905,505 Z" fill="#561b85"/>
<ellipse cx="882" cy="560" rx="14" ry="30" fill="#561b85"/><ellipse cx="986" cy="549" rx="12" ry="30" fill="#561b85"/>
<path d="M900,600 L915,615 L935,595 L960,612 L975,598" fill="none" stroke="#561b85" stroke-width="16"/>
<circle cx="934" cy="660" r="18" fill="none" stroke="#561b85" stroke-width="16"/></g></g></defs>
<g clip-path="url(#cv)">
<g style="mix-blend-mode:multiply"><path d="M735,548 L737,380 L745,303 L815,352 L893,398 C850,420 800,470 770,540 Z" fill="#fdeaed"/>
<clipPath id="oc1"><path d="M378.0,558.0 C371.7,551.7 363.5,544.8 352.0,532.0 C340.5,519.2 323.3,499.2 309.0,481.0 C294.7,462.8 280.3,444.5 266.0,423.0 C251.7,401.5 236.3,375.8 223.0,352.0 C209.7,328.2 197.0,298.7 186.0,280.0 C175.0,261.3 166.5,249.0 157.0,240.0 C147.5,231.0 138.5,225.5 129.0,226.0 C119.5,226.5 106.8,234.0 100.0,243.0 C93.2,252.0 90.0,268.0 88.0,280.0 C86.0,292.0 86.0,301.7 88.0,315.0 C90.0,328.3 93.7,341.0 100.0,360.0 C106.3,379.0 115.0,408.8 126.0,429.0 C137.0,449.2 149.8,463.8 166.0,481.0 C182.2,498.2 203.8,516.3 223.0,532.0 C242.2,547.7 262.8,563.0 281.0,575.0 C299.2,587.0 318.5,600.2 332.0,604.0 C345.5,607.8 352.3,603.7 362.0,598.0 C371.7,592.3 387.3,576.7 390.0,570.0 C392.7,563.3 384.3,564.3 378.0,558.0 Z"/></clipPath><path d="M378.0,558.0 C371.7,551.7 363.5,544.8 352.0,532.0 C340.5,519.2 323.3,499.2 309.0,481.0 C294.7,462.8 280.3,444.5 266.0,423.0 C251.7,401.5 236.3,375.8 223.0,352.0 C209.7,328.2 197.0,298.7 186.0,280.0 C175.0,261.3 166.5,249.0 157.0,240.0 C147.5,231.0 138.5,225.5 129.0,226.0 C119.5,226.5 106.8,234.0 100.0,243.0 C93.2,252.0 90.0,268.0 88.0,280.0 C86.0,292.0 86.0,301.7 88.0,315.0 C90.0,328.3 93.7,341.0 100.0,360.0 C106.3,379.0 115.0,408.8 126.0,429.0 C137.0,449.2 149.8,463.8 166.0,481.0 C182.2,498.2 203.8,516.3 223.0,532.0 C242.2,547.7 262.8,563.0 281.0,575.0 C299.2,587.0 318.5,600.2 332.0,604.0 C345.5,607.8 352.3,603.7 362.0,598.0 C371.7,592.3 387.3,576.7 390.0,570.0 C392.7,563.3 384.3,564.3 378.0,558.0 Z" fill="#fcdee3" stroke="#fdeaed" stroke-width="36" clip-path="url(#oc1)"/>
<clipPath id="oc2"><path d="M388.0,547.0 C409.8,531.3 440.0,518.2 466.0,509.0 C492.0,499.8 518.0,494.0 544.0,492.0 C570.0,490.0 597.7,492.0 622.0,497.0 C646.3,502.0 670.7,514.8 690.0,522.0 C709.3,529.2 726.0,539.5 738.0,540.0 C750.0,540.5 749.2,541.3 762.0,525.0 C774.8,508.7 798.7,461.2 815.0,442.0 C831.3,422.8 847.5,417.3 860.0,410.0 C872.5,402.7 880.8,396.3 890.0,398.0 C899.2,399.7 905.0,408.8 915.0,420.0 C925.0,431.2 941.2,455.3 950.0,465.0 C958.8,474.7 959.7,480.5 968.0,478.0 C976.3,475.5 988.0,460.5 1000.0,450.0 C1012.0,439.5 1028.7,423.0 1040.0,415.0 C1051.3,407.0 1060.8,400.3 1068.0,402.0 C1075.2,403.7 1081.8,410.3 1083.0,425.0 C1084.2,439.7 1078.8,470.0 1075.0,490.0 C1071.2,510.0 1054.2,535.3 1060.0,545.0 C1065.8,554.7 1096.7,545.5 1110.0,548.0 C1123.3,550.5 1138.3,553.0 1140.0,560.0 C1141.7,567.0 1119.2,582.5 1120.0,590.0 C1120.8,597.5 1148.3,596.7 1145.0,605.0 C1141.7,613.3 1122.5,630.0 1100.0,640.0 C1077.5,650.0 1033.3,650.0 1010.0,665.0 C986.7,680.0 973.3,707.5 960.0,730.0 C946.7,752.5 937.0,779.8 930.0,800.0 C923.0,820.2 919.0,834.7 918.0,851.0 C917.0,867.3 924.0,877.2 924.0,898.0 C924.0,918.8 922.7,955.2 918.0,976.0 C913.3,996.8 906.5,1013.0 896.0,1023.0 C885.5,1033.0 868.0,1034.5 855.0,1036.0 C842.0,1037.5 828.3,1037.8 818.0,1032.0 C807.7,1026.2 795.7,1018.8 793.0,1001.0 C790.3,983.2 805.7,924.0 802.0,925.0 C798.3,926.0 778.7,985.5 771.0,1007.0 C763.3,1028.5 762.2,1044.0 756.0,1054.0 C749.8,1064.0 741.8,1064.3 734.0,1067.0 C726.2,1069.7 717.3,1069.0 709.0,1070.0 C700.7,1071.0 692.3,1073.3 684.0,1073.0 C675.7,1072.7 664.2,1074.8 659.0,1068.0 C653.8,1061.2 653.7,1042.8 653.0,1032.0 C652.3,1021.2 661.8,1015.0 655.0,1003.0 C648.2,991.0 624.0,974.3 612.0,960.0 C600.0,945.7 590.7,930.2 583.0,917.0 C575.3,903.8 576.5,887.2 566.0,881.0 C555.5,874.8 530.5,870.8 520.0,880.0 C509.5,889.2 499.7,920.7 503.0,936.0 C506.3,951.3 529.0,960.8 540.0,972.0 C551.0,983.2 562.8,994.2 569.0,1003.0 C575.2,1011.8 577.0,1018.8 577.0,1025.0 C577.0,1031.2 573.2,1036.5 569.0,1040.0 C564.8,1043.5 556.8,1042.7 552.0,1046.0 C547.2,1049.3 546.7,1055.7 540.0,1060.0 C533.3,1064.3 524.5,1071.3 512.0,1072.0 C499.5,1072.7 480.7,1072.2 465.0,1064.0 C449.3,1055.8 433.7,1038.7 418.0,1023.0 C402.3,1007.3 382.0,993.3 371.0,970.0 C360.0,946.7 358.5,907.5 352.0,883.0 C345.5,858.5 338.0,849.8 332.0,823.0 C326.0,796.2 318.0,752.3 316.0,722.0 C314.0,691.7 316.8,660.8 320.0,641.0 C323.2,621.2 323.7,618.7 335.0,603.0 C346.3,587.3 366.2,562.7 388.0,547.0 Z"/></clipPath><path d="M388.0,547.0 C409.8,531.3 440.0,518.2 466.0,509.0 C492.0,499.8 518.0,494.0 544.0,492.0 C570.0,490.0 597.7,492.0 622.0,497.0 C646.3,502.0 670.7,514.8 690.0,522.0 C709.3,529.2 726.0,539.5 738.0,540.0 C750.0,540.5 749.2,541.3 762.0,525.0 C774.8,508.7 798.7,461.2 815.0,442.0 C831.3,422.8 847.5,417.3 860.0,410.0 C872.5,402.7 880.8,396.3 890.0,398.0 C899.2,399.7 905.0,408.8 915.0,420.0 C925.0,431.2 941.2,455.3 950.0,465.0 C958.8,474.7 959.7,480.5 968.0,478.0 C976.3,475.5 988.0,460.5 1000.0,450.0 C1012.0,439.5 1028.7,423.0 1040.0,415.0 C1051.3,407.0 1060.8,400.3 1068.0,402.0 C1075.2,403.7 1081.8,410.3 1083.0,425.0 C1084.2,439.7 1078.8,470.0 1075.0,490.0 C1071.2,510.0 1054.2,535.3 1060.0,545.0 C1065.8,554.7 1096.7,545.5 1110.0,548.0 C1123.3,550.5 1138.3,553.0 1140.0,560.0 C1141.7,567.0 1119.2,582.5 1120.0,590.0 C1120.8,597.5 1148.3,596.7 1145.0,605.0 C1141.7,613.3 1122.5,630.0 1100.0,640.0 C1077.5,650.0 1033.3,650.0 1010.0,665.0 C986.7,680.0 973.3,707.5 960.0,730.0 C946.7,752.5 937.0,779.8 930.0,800.0 C923.0,820.2 919.0,834.7 918.0,851.0 C917.0,867.3 924.0,877.2 924.0,898.0 C924.0,918.8 922.7,955.2 918.0,976.0 C913.3,996.8 906.5,1013.0 896.0,1023.0 C885.5,1033.0 868.0,1034.5 855.0,1036.0 C842.0,1037.5 828.3,1037.8 818.0,1032.0 C807.7,1026.2 795.7,1018.8 793.0,1001.0 C790.3,983.2 805.7,924.0 802.0,925.0 C798.3,926.0 778.7,985.5 771.0,1007.0 C763.3,1028.5 762.2,1044.0 756.0,1054.0 C749.8,1064.0 741.8,1064.3 734.0,1067.0 C726.2,1069.7 717.3,1069.0 709.0,1070.0 C700.7,1071.0 692.3,1073.3 684.0,1073.0 C675.7,1072.7 664.2,1074.8 659.0,1068.0 C653.8,1061.2 653.7,1042.8 653.0,1032.0 C652.3,1021.2 661.8,1015.0 655.0,1003.0 C648.2,991.0 624.0,974.3 612.0,960.0 C600.0,945.7 590.7,930.2 583.0,917.0 C575.3,903.8 576.5,887.2 566.0,881.0 C555.5,874.8 530.5,870.8 520.0,880.0 C509.5,889.2 499.7,920.7 503.0,936.0 C506.3,951.3 529.0,960.8 540.0,972.0 C551.0,983.2 562.8,994.2 569.0,1003.0 C575.2,1011.8 577.0,1018.8 577.0,1025.0 C577.0,1031.2 573.2,1036.5 569.0,1040.0 C564.8,1043.5 556.8,1042.7 552.0,1046.0 C547.2,1049.3 546.7,1055.7 540.0,1060.0 C533.3,1064.3 524.5,1071.3 512.0,1072.0 C499.5,1072.7 480.7,1072.2 465.0,1064.0 C449.3,1055.8 433.7,1038.7 418.0,1023.0 C402.3,1007.3 382.0,993.3 371.0,970.0 C360.0,946.7 358.5,907.5 352.0,883.0 C345.5,858.5 338.0,849.8 332.0,823.0 C326.0,796.2 318.0,752.3 316.0,722.0 C314.0,691.7 316.8,660.8 320.0,641.0 C323.2,621.2 323.7,618.7 335.0,603.0 C346.3,587.3 366.2,562.7 388.0,547.0 Z" fill="#fcdee3" stroke="#fdeaed" stroke-width="36" clip-path="url(#oc2)"/>
<path d="M573,648 C576,680 578,710 577,738" fill="none" stroke="#fdeaed" stroke-width="7" stroke-linecap="round"/></g>
<g style="mix-blend-mode:multiply"><g transform="translate(263,-6)"><g fill="#ddecf2" stroke="none"><path d="M662.0,581.0 C654.5,571.0 629.5,545.2 617.0,521.0 C604.5,496.8 595.7,463.5 587.0,436.0 C578.3,408.5 569.7,381.0 565.0,356.0 C560.3,331.0 558.3,307.7 559.0,286.0 C559.7,264.3 564.0,241.0 569.0,226.0 C574.0,211.0 581.5,202.5 589.0,196.0 C596.5,189.5 606.0,187.5 614.0,187.0 C622.0,186.5 630.2,188.5 637.0,193.0 C643.8,197.5 650.7,203.5 655.0,214.0 C659.3,224.5 661.0,239.0 663.0,256.0 C665.0,273.0 663.7,290.2 667.0,316.0 C670.3,341.8 677.0,382.7 683.0,411.0 C689.0,439.3 694.0,461.8 703.0,486.0 C712.0,510.2 731.3,544.3 737.0,556.0 L760,590 Z"/><path d="M1090.0,575.0 C1087.0,573.0 1089.5,566.3 1072.0,563.0 C1054.5,559.7 1014.2,556.8 985.0,555.0 C955.8,553.2 924.2,551.2 897.0,552.0 C869.8,552.8 842.8,557.0 822.0,560.0 C801.2,563.0 786.5,564.7 772.0,570.0 C757.5,575.3 747.5,583.7 735.0,592.0 C722.5,600.3 708.7,610.3 697.0,620.0 C685.3,629.7 675.3,639.2 665.0,650.0 C654.7,660.8 644.2,674.2 635.0,685.0 C625.8,695.8 618.3,705.7 610.0,715.0 C601.7,724.3 589.2,736.7 585.0,741.0 C581.5,741.0 570.0,742.8 564.0,741.0 C558.0,739.2 555.5,732.3 549.0,730.0 C542.5,727.7 532.8,726.5 525.0,727.0 C517.2,727.5 508.5,730.2 502.0,733.0 C495.5,735.8 488.7,742.2 486.0,744.0 C480.8,749.7 468.0,763.2 455.0,778.0 C442.0,792.8 420.7,818.3 408.0,833.0 C395.3,847.7 387.2,857.2 379.0,866.0 C370.8,874.8 363.7,880.2 359.0,886.0 C354.3,891.8 352.5,896.0 351.0,901.0 C349.5,906.0 349.3,912.2 350.0,916.0 C350.7,919.8 352.5,922.2 355.0,924.0 C357.5,925.8 362.7,925.5 365.0,927.0 C367.3,928.5 368.7,930.5 369.0,933.0 C369.3,935.5 366.5,939.0 367.0,942.0 C367.5,945.0 369.0,948.7 372.0,951.0 C375.0,953.3 380.3,955.3 385.0,956.0 C389.7,956.7 396.3,954.7 400.0,955.0 C403.7,955.3 405.5,956.2 407.0,958.0 C408.5,959.8 408.2,963.5 409.0,966.0 C409.8,968.5 410.2,971.5 412.0,973.0 C413.8,974.5 417.0,975.3 420.0,975.0 C423.0,974.7 423.8,974.7 430.0,971.0 C436.2,967.3 446.0,960.5 457.0,953.0 C468.0,945.5 483.8,934.5 496.0,926.0 C508.2,917.5 519.8,910.5 530.0,902.0 C540.2,893.5 552.5,879.5 557.0,875.0 C562.5,876.3 574.5,879.5 590.0,883.0 C605.5,886.5 625.8,894.7 650.0,896.0 C674.2,897.3 708.3,895.7 735.0,891.0 C761.7,886.3 788.0,877.3 810.0,868.0 C832.0,858.7 856.2,840.5 867.0,835.0 C877.8,829.5 873.7,835.0 875.0,835.0 C882.5,836.0 912.0,835.2 935.0,836.0 C958.0,836.8 986.8,839.2 1010.0,841.0 C1033.2,842.8 1055.0,845.5 1074.0,847.0 C1093.0,848.5 1109.5,848.3 1124.0,850.0 C1138.5,851.7 1146.5,852.5 1161.0,857.0 C1175.5,861.5 1191.2,867.8 1211.0,877.0 C1230.8,886.2 1262.3,903.7 1280.0,912.0 C1297.7,920.3 1302.5,920.7 1317.0,927.0 C1331.5,933.3 1352.3,942.5 1367.0,950.0 C1381.7,957.5 1394.5,965.8 1405.0,972.0 C1415.5,978.2 1423.3,983.7 1430.0,987.0 C1436.7,990.3 1442.5,991.2 1445.0,992.0 C1446.8,991.3 1453.8,990.0 1456.0,988.0 C1458.2,986.0 1457.0,982.2 1458.0,980.0 C1459.0,977.8 1460.2,975.2 1462.0,974.5 C1463.8,973.8 1466.2,975.4 1469.0,976.0 C1471.8,976.6 1475.7,978.3 1479.0,978.0 C1482.3,977.7 1486.7,976.2 1489.0,974.0 C1491.3,971.8 1492.5,967.8 1493.0,965.0 C1493.5,962.2 1491.2,958.7 1492.0,957.0 C1492.8,955.3 1495.0,955.5 1498.0,955.0 C1501.0,954.5 1506.2,955.0 1510.0,954.0 C1513.8,953.0 1518.8,951.5 1521.0,949.0 C1523.2,946.5 1523.5,942.5 1523.0,939.0 C1522.5,935.5 1520.3,931.3 1518.0,928.0 C1515.7,924.7 1512.5,922.7 1509.0,919.0 C1505.5,915.3 1501.5,910.3 1497.0,906.0 C1492.5,901.7 1487.3,897.5 1482.0,893.0 C1476.7,888.5 1471.7,884.2 1465.0,879.0 C1458.3,873.8 1452.8,870.0 1442.0,862.0 C1431.2,854.0 1413.7,840.2 1400.0,831.0 C1386.3,821.8 1368.8,811.7 1360.0,807.0 C1351.2,802.3 1349.2,803.7 1347.0,803.0 L1330,795 L1343,752 L1420,735 L1300,700 L1150,600 Z"/><path d="M1348.0,798.0 C1349.5,796.3 1353.0,789.8 1357.0,788.0 C1361.0,786.2 1367.5,786.2 1372.0,787.0 C1376.5,787.8 1376.7,789.2 1384.0,793.0 C1391.3,796.8 1400.0,802.2 1416.0,810.0 C1432.0,817.8 1459.2,828.7 1480.0,840.0 C1500.8,851.3 1530.8,871.7 1541.0,878.0 C1544.0,879.5 1553.5,884.8 1559.0,887.0 C1564.5,889.2 1570.2,891.0 1574.0,891.0 C1577.8,891.0 1581.0,889.2 1582.0,887.0 C1583.0,884.8 1579.7,880.2 1580.0,878.0 C1580.3,875.8 1582.2,874.2 1584.0,874.0 C1585.8,873.8 1588.5,876.0 1591.0,877.0 C1593.5,878.0 1596.2,880.2 1599.0,880.0 C1601.8,879.8 1605.2,878.2 1608.0,876.0 C1610.8,873.8 1615.0,870.2 1616.0,867.0 C1617.0,863.8 1613.7,859.5 1614.0,857.0 C1614.3,854.5 1616.2,852.5 1618.0,852.0 C1619.8,851.5 1622.7,853.5 1625.0,854.0 C1627.3,854.5 1629.5,855.8 1632.0,855.0 C1634.5,854.2 1638.3,851.7 1640.0,849.0 C1641.7,846.3 1642.7,842.7 1642.0,839.0 C1641.3,835.3 1638.8,830.8 1636.0,827.0 C1633.2,823.2 1629.3,819.8 1625.0,816.0 C1620.7,812.2 1616.7,809.2 1610.0,804.0 C1603.3,798.8 1593.3,791.3 1585.0,785.0 C1576.7,778.7 1569.2,771.7 1560.0,766.0 C1550.8,760.3 1540.0,755.8 1530.0,751.0 C1520.0,746.2 1510.7,741.8 1500.0,737.0 C1489.3,732.2 1471.7,724.5 1466.0,722.0 L1435,727 L1340,750 L1335,790 Z"/><path d="M1166.0,588.0 C1160.8,586.3 1145.2,580.2 1135.0,578.0 C1124.8,575.8 1112.5,574.2 1105.0,575.0 C1097.5,575.8 1091.3,579.2 1090.0,583.0 C1088.7,586.8 1092.5,591.3 1097.0,598.0 C1101.5,604.7 1108.8,614.8 1117.0,623.0 C1125.2,631.2 1141.2,643.0 1146.0,647.0 C1135.0,646.2 1091.0,642.8 1080.0,642.0 C1079.0,643.7 1074.5,648.5 1074.0,652.0 C1073.5,655.5 1074.3,659.5 1077.0,663.0 C1079.7,666.5 1084.5,668.3 1090.0,673.0 C1095.5,677.7 1102.5,685.3 1110.0,691.0 C1117.5,696.7 1125.0,702.0 1135.0,707.0 C1145.0,712.0 1157.5,716.7 1170.0,721.0 C1182.5,725.3 1195.8,729.3 1210.0,733.0 C1224.2,736.7 1240.0,740.3 1255.0,743.0 C1270.0,745.7 1284.7,748.3 1300.0,749.0 C1315.3,749.7 1332.0,748.7 1347.0,747.0 C1362.0,745.3 1375.3,742.3 1390.0,739.0 C1404.7,735.7 1420.8,731.8 1435.0,727.0 C1449.2,722.2 1462.5,716.2 1475.0,710.0 C1487.5,703.8 1499.2,697.0 1510.0,690.0 C1520.8,683.0 1532.8,674.3 1540.0,668.0 C1547.2,661.7 1550.8,657.0 1553.0,652.0 C1555.2,647.0 1556.0,642.2 1553.0,638.0 C1550.0,633.8 1542.7,630.7 1535.0,627.0 C1527.3,623.3 1511.7,617.8 1507.0,616.0 C1512.5,609.7 1531.5,587.8 1540.0,578.0 C1548.5,568.2 1554.8,562.2 1558.0,557.0 C1561.2,551.8 1560.8,549.2 1559.0,547.0 C1557.2,544.8 1555.2,543.2 1547.0,544.0 C1538.8,544.8 1523.7,548.7 1510.0,552.0 C1496.3,555.3 1472.5,562.0 1465.0,564.0 C1465.8,555.3 1468.0,529.0 1470.0,512.0 C1472.0,495.0 1475.0,478.7 1477.0,462.0 C1479.0,445.3 1481.0,425.3 1482.0,412.0 C1483.0,398.7 1483.3,389.7 1483.0,382.0 C1482.7,374.3 1482.7,370.0 1480.0,366.0 C1477.3,362.0 1472.0,357.8 1467.0,358.0 C1462.0,358.2 1456.2,361.3 1450.0,367.0 C1443.8,372.7 1435.8,383.2 1430.0,392.0 C1424.2,400.8 1419.7,409.5 1415.0,420.0 C1410.3,430.5 1405.3,445.0 1402.0,455.0 C1398.7,465.0 1396.2,475.8 1395.0,480.0 C1381.0,481.7 1325.0,488.3 1311.0,490.0 C1311.8,483.3 1314.5,463.0 1316.0,450.0 C1317.5,437.0 1319.0,423.3 1320.0,412.0 C1321.0,400.7 1321.8,389.8 1322.0,382.0 C1322.2,374.2 1322.2,370.0 1321.0,365.0 C1319.8,360.0 1318.5,355.0 1315.0,352.0 C1311.5,349.0 1305.0,347.0 1300.0,347.0 C1295.0,347.0 1290.8,348.2 1285.0,352.0 C1279.2,355.8 1272.5,362.5 1265.0,370.0 C1257.5,377.5 1248.3,386.7 1240.0,397.0 C1231.7,407.3 1222.5,419.8 1215.0,432.0 C1207.5,444.2 1201.3,456.7 1195.0,470.0 C1188.7,483.3 1181.7,498.7 1177.0,512.0 C1172.3,525.3 1168.8,537.3 1167.0,550.0 C1165.2,562.7 1166.2,581.7 1166.0,588.0 Z"/></g>
<g fill="none" stroke="#e8f2f6" stroke-width="18" stroke-linecap="round" stroke-linejoin="round"><path d="M662.0,581.0 C654.5,571.0 629.5,545.2 617.0,521.0 C604.5,496.8 595.7,463.5 587.0,436.0 C578.3,408.5 569.7,381.0 565.0,356.0 C560.3,331.0 558.3,307.7 559.0,286.0 C559.7,264.3 564.0,241.0 569.0,226.0 C574.0,211.0 581.5,202.5 589.0,196.0 C596.5,189.5 606.0,187.5 614.0,187.0 C622.0,186.5 630.2,188.5 637.0,193.0 C643.8,197.5 650.7,203.5 655.0,214.0 C659.3,224.5 661.0,239.0 663.0,256.0 C665.0,273.0 663.7,290.2 667.0,316.0 C670.3,341.8 677.0,382.7 683.0,411.0 C689.0,439.3 694.0,461.8 703.0,486.0 C712.0,510.2 731.3,544.3 737.0,556.0"/><path d="M1090.0,575.0 C1087.0,573.0 1089.5,566.3 1072.0,563.0 C1054.5,559.7 1014.2,556.8 985.0,555.0 C955.8,553.2 924.2,551.2 897.0,552.0 C869.8,552.8 842.8,557.0 822.0,560.0 C801.2,563.0 786.5,564.7 772.0,570.0 C757.5,575.3 747.5,583.7 735.0,592.0 C722.5,600.3 708.7,610.3 697.0,620.0 C685.3,629.7 675.3,639.2 665.0,650.0 C654.7,660.8 644.2,674.2 635.0,685.0 C625.8,695.8 618.3,705.7 610.0,715.0 C601.7,724.3 589.2,736.7 585.0,741.0 C581.5,741.0 570.0,742.8 564.0,741.0 C558.0,739.2 555.5,732.3 549.0,730.0 C542.5,727.7 532.8,726.5 525.0,727.0 C517.2,727.5 508.5,730.2 502.0,733.0 C495.5,735.8 488.7,742.2 486.0,744.0 C480.8,749.7 468.0,763.2 455.0,778.0 C442.0,792.8 420.7,818.3 408.0,833.0 C395.3,847.7 387.2,857.2 379.0,866.0 C370.8,874.8 363.7,880.2 359.0,886.0 C354.3,891.8 352.5,896.0 351.0,901.0 C349.5,906.0 349.3,912.2 350.0,916.0 C350.7,919.8 352.5,922.2 355.0,924.0 C357.5,925.8 362.7,925.5 365.0,927.0 C367.3,928.5 368.7,930.5 369.0,933.0 C369.3,935.5 366.5,939.0 367.0,942.0 C367.5,945.0 369.0,948.7 372.0,951.0 C375.0,953.3 380.3,955.3 385.0,956.0 C389.7,956.7 396.3,954.7 400.0,955.0 C403.7,955.3 405.5,956.2 407.0,958.0 C408.5,959.8 408.2,963.5 409.0,966.0 C409.8,968.5 410.2,971.5 412.0,973.0 C413.8,974.5 417.0,975.3 420.0,975.0 C423.0,974.7 423.8,974.7 430.0,971.0 C436.2,967.3 446.0,960.5 457.0,953.0 C468.0,945.5 483.8,934.5 496.0,926.0 C508.2,917.5 519.8,910.5 530.0,902.0 C540.2,893.5 552.5,879.5 557.0,875.0 C562.5,876.3 574.5,879.5 590.0,883.0 C605.5,886.5 625.8,894.7 650.0,896.0 C674.2,897.3 708.3,895.7 735.0,891.0 C761.7,886.3 788.0,877.3 810.0,868.0 C832.0,858.7 852.0,844.3 867.0,835.0 C882.0,825.7 894.5,815.8 900.0,812.0"/><path d="M872.0,836.0 C882.5,836.0 912.0,835.2 935.0,836.0 C958.0,836.8 986.8,839.2 1010.0,841.0 C1033.2,842.8 1055.0,845.5 1074.0,847.0 C1093.0,848.5 1109.5,848.3 1124.0,850.0 C1138.5,851.7 1146.5,852.5 1161.0,857.0 C1175.5,861.5 1191.2,867.8 1211.0,877.0 C1230.8,886.2 1262.3,903.7 1280.0,912.0 C1297.7,920.3 1302.5,920.7 1317.0,927.0 C1331.5,933.3 1352.3,942.5 1367.0,950.0 C1381.7,957.5 1394.5,965.8 1405.0,972.0 C1415.5,978.2 1423.3,983.7 1430.0,987.0 C1436.7,990.3 1442.5,991.2 1445.0,992.0 C1446.8,991.3 1453.8,990.0 1456.0,988.0 C1458.2,986.0 1457.0,982.2 1458.0,980.0 C1459.0,977.8 1460.2,975.2 1462.0,974.5 C1463.8,973.8 1466.2,975.4 1469.0,976.0 C1471.8,976.6 1475.7,978.3 1479.0,978.0 C1482.3,977.7 1486.7,976.2 1489.0,974.0 C1491.3,971.8 1492.5,967.8 1493.0,965.0 C1493.5,962.2 1491.2,958.7 1492.0,957.0 C1492.8,955.3 1495.0,955.5 1498.0,955.0 C1501.0,954.5 1506.2,955.0 1510.0,954.0 C1513.8,953.0 1518.8,951.5 1521.0,949.0 C1523.2,946.5 1523.5,942.5 1523.0,939.0 C1522.5,935.5 1520.3,931.3 1518.0,928.0 C1515.7,924.7 1512.5,922.7 1509.0,919.0 C1505.5,915.3 1501.5,910.3 1497.0,906.0 C1492.5,901.7 1487.3,897.5 1482.0,893.0 C1476.7,888.5 1471.7,884.2 1465.0,879.0 C1458.3,873.8 1452.8,870.0 1442.0,862.0 C1431.2,854.0 1413.7,840.2 1400.0,831.0 C1386.3,821.8 1368.8,811.7 1360.0,807.0 C1351.2,802.3 1349.2,803.7 1347.0,803.0"/><path d="M1348.0,798.0 C1349.5,796.3 1353.0,789.8 1357.0,788.0 C1361.0,786.2 1367.5,786.2 1372.0,787.0 C1376.5,787.8 1376.7,789.2 1384.0,793.0 C1391.3,796.8 1400.0,802.2 1416.0,810.0 C1432.0,817.8 1459.2,828.7 1480.0,840.0 C1500.8,851.3 1530.8,871.7 1541.0,878.0 C1544.0,879.5 1553.5,884.8 1559.0,887.0 C1564.5,889.2 1570.2,891.0 1574.0,891.0 C1577.8,891.0 1581.0,889.2 1582.0,887.0 C1583.0,884.8 1579.7,880.2 1580.0,878.0 C1580.3,875.8 1582.2,874.2 1584.0,874.0 C1585.8,873.8 1588.5,876.0 1591.0,877.0 C1593.5,878.0 1596.2,880.2 1599.0,880.0 C1601.8,879.8 1605.2,878.2 1608.0,876.0 C1610.8,873.8 1615.0,870.2 1616.0,867.0 C1617.0,863.8 1613.7,859.5 1614.0,857.0 C1614.3,854.5 1616.2,852.5 1618.0,852.0 C1619.8,851.5 1622.7,853.5 1625.0,854.0 C1627.3,854.5 1629.5,855.8 1632.0,855.0 C1634.5,854.2 1638.3,851.7 1640.0,849.0 C1641.7,846.3 1642.7,842.7 1642.0,839.0 C1641.3,835.3 1638.8,830.8 1636.0,827.0 C1633.2,823.2 1629.3,819.8 1625.0,816.0 C1620.7,812.2 1616.7,809.2 1610.0,804.0 C1603.3,798.8 1593.3,791.3 1585.0,785.0 C1576.7,778.7 1569.2,771.7 1560.0,766.0 C1550.8,760.3 1540.0,755.8 1530.0,751.0 C1520.0,746.2 1510.7,741.8 1500.0,737.0 C1489.3,732.2 1471.7,724.5 1466.0,722.0"/><path d="M1166.0,588.0 C1160.8,586.3 1145.2,580.2 1135.0,578.0 C1124.8,575.8 1112.5,574.2 1105.0,575.0 C1097.5,575.8 1091.3,579.2 1090.0,583.0 C1088.7,586.8 1092.5,591.3 1097.0,598.0 C1101.5,604.7 1108.8,614.8 1117.0,623.0 C1125.2,631.2 1141.2,643.0 1146.0,647.0 C1135.0,646.2 1091.0,642.8 1080.0,642.0 C1079.0,643.7 1074.5,648.5 1074.0,652.0 C1073.5,655.5 1074.3,659.5 1077.0,663.0 C1079.7,666.5 1084.5,668.3 1090.0,673.0 C1095.5,677.7 1102.5,685.3 1110.0,691.0 C1117.5,696.7 1125.0,702.0 1135.0,707.0 C1145.0,712.0 1157.5,716.7 1170.0,721.0 C1182.5,725.3 1195.8,729.3 1210.0,733.0 C1224.2,736.7 1240.0,740.3 1255.0,743.0 C1270.0,745.7 1284.7,748.3 1300.0,749.0 C1315.3,749.7 1332.0,748.7 1347.0,747.0 C1362.0,745.3 1375.3,742.3 1390.0,739.0 C1404.7,735.7 1420.8,731.8 1435.0,727.0 C1449.2,722.2 1462.5,716.2 1475.0,710.0 C1487.5,703.8 1499.2,697.0 1510.0,690.0 C1520.8,683.0 1532.8,674.3 1540.0,668.0 C1547.2,661.7 1550.8,657.0 1553.0,652.0 C1555.2,647.0 1556.0,642.2 1553.0,638.0 C1550.0,633.8 1542.7,630.7 1535.0,627.0 C1527.3,623.3 1511.7,617.8 1507.0,616.0 C1512.5,609.7 1531.5,587.8 1540.0,578.0 C1548.5,568.2 1554.8,562.2 1558.0,557.0 C1561.2,551.8 1560.8,549.2 1559.0,547.0 C1557.2,544.8 1555.2,543.2 1547.0,544.0 C1538.8,544.8 1523.7,548.7 1510.0,552.0 C1496.3,555.3 1472.5,562.0 1465.0,564.0 C1465.8,555.3 1468.0,529.0 1470.0,512.0 C1472.0,495.0 1475.0,478.7 1477.0,462.0 C1479.0,445.3 1481.0,425.3 1482.0,412.0 C1483.0,398.7 1483.3,389.7 1483.0,382.0 C1482.7,374.3 1482.7,370.0 1480.0,366.0 C1477.3,362.0 1472.0,357.8 1467.0,358.0 C1462.0,358.2 1456.2,361.3 1450.0,367.0 C1443.8,372.7 1435.8,383.2 1430.0,392.0 C1424.2,400.8 1419.7,409.5 1415.0,420.0 C1410.3,430.5 1405.3,445.0 1402.0,455.0 C1398.7,465.0 1396.2,475.8 1395.0,480.0 C1381.0,481.7 1325.0,488.3 1311.0,490.0 C1311.8,483.3 1314.5,463.0 1316.0,450.0 C1317.5,437.0 1319.0,423.3 1320.0,412.0 C1321.0,400.7 1321.8,389.8 1322.0,382.0 C1322.2,374.2 1322.2,370.0 1321.0,365.0 C1319.8,360.0 1318.5,355.0 1315.0,352.0 C1311.5,349.0 1305.0,347.0 1300.0,347.0 C1295.0,347.0 1290.8,348.2 1285.0,352.0 C1279.2,355.8 1272.5,362.5 1265.0,370.0 C1257.5,377.5 1248.3,386.7 1240.0,397.0 C1231.7,407.3 1222.5,419.8 1215.0,432.0 C1207.5,444.2 1201.3,456.7 1195.0,470.0 C1188.7,483.3 1181.7,498.7 1177.0,512.0 C1172.3,525.3 1168.8,537.3 1167.0,550.0 C1165.2,562.7 1166.2,581.7 1166.0,588.0 Z"/><path d="M1300.0,671.0 C1300.5,673.5 1300.7,682.8 1303.0,686.0 C1305.3,689.2 1308.5,691.7 1314.0,690.0 C1319.5,688.3 1328.5,681.0 1336.0,676.0 C1343.5,671.0 1352.5,661.0 1359.0,660.0 C1365.5,659.0 1369.2,667.5 1375.0,670.0 C1380.8,672.5 1388.2,675.3 1394.0,675.0 C1399.8,674.7 1406.0,671.3 1410.0,668.0 C1414.0,664.7 1416.3,658.2 1418.0,655.0 C1419.7,651.8 1419.7,650.0 1420.0,649.0"/><ellipse cx="1359" cy="778" rx="18" ry="26" transform="rotate(22 1359 778)"/><ellipse cx="1406" cy="765" rx="15" ry="24" transform="rotate(-40 1406 765)"/></g>
<g fill="#e8f2f6" stroke="#e8f2f6" stroke-width="3" stroke-linejoin="round"><path transform="translate(-22,4)" d="M1136,314 L1247,376 C1225,400 1200,440 1185,480 C1175,510 1168,550 1167,592 L1160,560 L1150,480 Z"/><path d="M1318,425 L1395,472 L1393,487 L1303,497 Z"/><ellipse cx="1303" cy="586" rx="13.5" ry="35" transform="rotate(18 1303 586)"/><ellipse cx="1406.5" cy="572" rx="12.5" ry="36.5" transform="rotate(3 1406.5 572)"/></g></g></g>
<use href="#catS"/>
</g></svg>
<div class="gal">Gallery</div>
<div class="circ" style="left:192px"></div>
<div class="circ" style="left:308px"></div>
<div class="circ" style="left:424px"></div>
<div class="circ" style="left:540px"></div>
<svg style="position:absolute;left:0;top:0" width="2048" height="88" viewBox="0 0 2048 88">
<circle cx="230.5" cy="37.8" r="10.8" fill="#a4a4a4"/><circle cx="237" cy="31" r="6.8" fill="#151515"/>
<path d="M209.5,58.3 L228,40" stroke="#a4a4a4" stroke-width="6.5" stroke-linecap="round"/>
<path d="M331.6,57.9 L343.5,46" stroke="#a4a4a4" stroke-width="7" stroke-linecap="round"/>
<path d="M346.5,43 L352,37" stroke="#a4a4a4" stroke-width="7" stroke-linecap="round"/>
<path d="M333.4,27.6 Q334.5,35.3 342,36.4 Q334.5,37.5 333.4,44.7 Q332.3,37.5 325,36.4 Q332.3,35.3 333.4,27.6 Z" fill="#a4a4a4"/>
<path d="M344.5,26.5 Q345,30 348.5,30.5 Q345,31 344.5,34.5 Q344,31 340.5,30.5 Q344,30 344.5,26.5 Z" fill="#a4a4a4"/>
<path d="M451,34 C452,30.5 455.5,28 461,28 L469.5,28 A3,3 0 0 1 469.5,34 Z" fill="#a4a4a4"/>
<path d="M452.5,38.5 C450.5,42 453,44.5 455,46.5 C457.5,49 457.5,50 457.5,51" stroke="#a4a4a4" stroke-width="6.5" fill="none" stroke-linecap="butt"/>
<path d="M460.5,54 C459,57.5 455.5,60 450,60 L443.5,60 A3,3 0 0 1 443.5,54 Z" fill="#a4a4a4"/>
<path d="M557.7,58.3 L571,45" stroke="#a4a4a4" stroke-width="5" stroke-linecap="round"/>
<path d="M587.5,28 L558.7,41.7 L568.5,44.5 L574.3,56.9 Z" fill="#a4a4a4" stroke="#a4a4a4" stroke-width="1" stroke-linejoin="round"/>
<circle cx="1008" cy="25" r="5" fill="#9a9a9a"/><circle cx="1024" cy="25" r="5" fill="#9a9a9a"/><circle cx="1040" cy="25" r="5" fill="#9a9a9a"/>
<path d="M1468.3,19 C1463,21 1443,38 1432.3,50.5 L1434.8,53 C1447,43 1466,25 1468.3,19 Z" fill="#0a7aff"/>
<path d="M1432.5,55.5 C1431,50.5 1422,52.5 1419,57.5 C1417,62 1416,66 1411.5,68 C1418,70 1428,67 1432.5,58 Z" fill="#0a7aff"/>
<path d="M1592.3,18 L1604,30 L1598.7,35.8 L1599.3,45.4 C1599,49 1598,51 1596.6,52 L1584.8,60.5 C1583,62 1580,62 1578.3,59.4 L1565.4,69.6 L1559,69.5 C1556.5,68 1555.5,64 1556.8,61.6 L1566,49.7 L1562.2,41 C1561.5,38.5 1562,36.5 1562.7,35.8 L1570.8,26 C1572,24.5 1573,24 1574,24 L1586.4,23.4 Z" fill="#c8c8c8"/>
<path d="M1590.5,47 L1568,67" stroke="#1e1e1e" stroke-width="2.2" stroke-linecap="round"/>
<path d="M1692.9,54 L1723,23.5 Q1730.5,17 1738,23.5 L1747.1,33.1 L1716.5,64 Q1710,70.5 1703,64 Z" fill="#c8c8c8"/>
<path d="M1701.5,45 L1718.5,62" stroke="#1e1e1e" stroke-width="2"/>
<rect x="1848.1" y="19.7" width="36" height="36.5" rx="6.5" fill="#c8c8c8"/>
<rect x="1834.3" y="30" width="39.5" height="39.5" rx="7.5" fill="#c8c8c8" stroke="#1e1e1e" stroke-width="1.8"/>
<circle cx="2000.5" cy="43.5" r="29.5" fill="#32142a" stroke="#8e8e8e" stroke-width="2.5"/>
</svg>
<div id="side"><div class="track" style="top:8px;height:339px"></div><div class="thumb" style="top:209px"></div><div class="track" style="top:512px;height:339px"></div><div class="thumb" style="top:512px"></div></div>
<svg style="position:absolute;left:0;top:0" width="90" height="1220" viewBox="0 0 90 1220">
<rect x="25" y="587.7" width="34" height="34" rx="7" fill="none" stroke="#9c9c9c" stroke-width="4.4"/>
<path d="M37.3,1071 L49.2,1071 A9.5,9.5 0 0 1 49.2,1090 L29.1,1090" fill="none" stroke="#a0a0a0" stroke-width="3.8" stroke-linecap="round"/>
<path d="M25,1071 L36.4,1063.7 L36.4,1078.3 Z" fill="#a0a0a0" stroke="#a0a0a0" stroke-width="1.5" stroke-linejoin="round"/>
<path d="M46.5,1154.8 L34.6,1154.8 A9.6,9.6 0 0 0 34.6,1174 L55.6,1174" fill="none" stroke="#474747" stroke-width="3.8" stroke-linecap="round"/>
<path d="M59.2,1154.8 L47.4,1148 L47.4,1161.6 Z" fill="#474747" stroke="#474747" stroke-width="1.5" stroke-linejoin="round"/>
</svg>
<div id="panel"></div><div id="ptrack"></div>
<div style="position:absolute;left:596px;top:1429px;width:118px;height:60px;background:#3d3d3d;border-radius:8px"></div>
<div class="txt" style="left:250px;top:1369px;font-weight:bold;font-size:33px;-webkit-text-stroke:0px">Play</div>
<div class="txt" style="left:1487px;top:1367px">Settings</div>
<div class="txt" style="left:1650px;top:1367px;letter-spacing:-0.6px">Add Frame</div>
<div class="frame" style="left:588px"></div>
<div class="frame" style="left:726px"><svg width="108" height="56" viewBox="0 127 2065 1071"><use href="#catC" transform="translate(-60,0)"/></svg></div>
<div class="frame" style="left:848px"><svg width="108" height="56" viewBox="0 127 2065 1071"><use href="#catC" transform="translate(0,0)"/></svg></div>
<div class="frame" style="left:970px"><svg width="108" height="56" viewBox="0 127 2065 1071"><use href="#catS" transform="translate(0,0)"/></svg></div>
<div class="frame" style="left:1092px"><svg width="108" height="56" viewBox="0 127 2065 1071"><use href="#catS" transform="translate(277,0)"/></svg></div>
<div class="frame" style="left:1214px"><svg width="108" height="56" viewBox="0 127 2065 1071"><use href="#catC" transform="translate(650,0)"/></svg></div>
<div class="frame" style="left:1336px"><svg width="108" height="56" viewBox="0 127 2065 1071"><use href="#catC" transform="translate(650,0)"/></svg></div>
<div class="frame" style="left:1458px"><svg width="108" height="56" viewBox="0 127 2065 1071"><use href="#catC" transform="translate(711,0)"/></svg></div>
<div class="frame" style="left:1580px"><svg width="108" height="56" viewBox="0 127 2065 1071"><use href="#catS" transform="translate(-153,0)"/></svg></div>
<div class="frame" style="left:1702px"><svg width="108" height="56" viewBox="0 127 2065 1071"><use href="#catS" transform="translate(-153,0)"/></svg></div>
<div style="position:absolute;left:984px;top:1501px;width:80px;height:5px;background:#0a84ff;border-radius:3px"></div>
</body></html>
